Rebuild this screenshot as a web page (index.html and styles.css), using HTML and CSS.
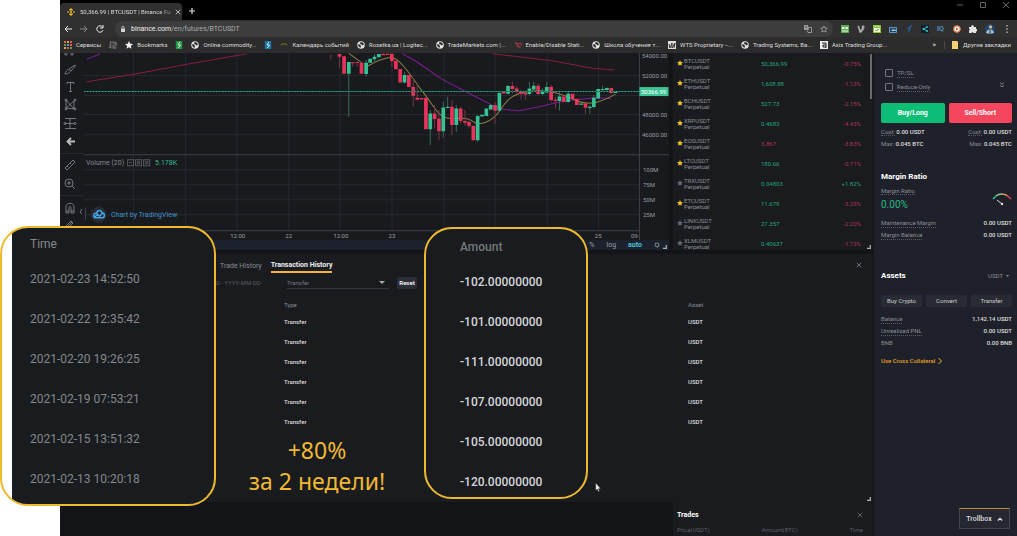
FILE: index.html
```html
<!DOCTYPE html>
<html lang="en">
<head>
<meta charset="utf-8">
<title>BTCUSDT | Binance Futures</title>
<link rel="stylesheet" href="styles.css">
</head>
<body>
<svg class="defs" aria-hidden="true">
  <symbol id="globe" viewBox="0 0 16 16"><circle cx="8" cy="8" r="7.5" fill="#e4e4e4"/><path d="M2 6l4 1 2 3-1 4-4-3zM7 2l5 1 2 4-3 2-2-2-3-1z" fill="#333"/></symbol>
  <symbol id="star" viewBox="0 0 16 16"><path d="M8 0l2.400 5.300 5.600.6-4.200 3.900L13 15.600 8 12.700 3 15.600l1.200-5.800L0 5.900l5.600-.6z" fill="currentColor"/></symbol>
  <symbol id="close" viewBox="0 0 8 8"><path d="M1 1l6 6M7 1L1 7" stroke="currentColor" fill="none"/></symbol>
  <symbol id="grip" viewBox="0 0 6 6"><path d="M5 0v5H0" stroke="currentColor" stroke-width="2" fill="none"/></symbol>
  <symbol id="doc" viewBox="0 0 10 10"><path d="M1 0h8v10H1z" fill="currentColor"/><path d="M6 1L4 5h3L4 9" stroke="#fff" fill="none"/></symbol>
</svg>
<div class="page">
  <header class="browser">
    <div class="tabs">
      <div class="tab">
        <svg class="i8" viewBox="0 0 16 16"><path d="M8 0l4 4-2 2-2-2-2 2-2-2zM8 5.500L10.500 8 8 10.500 5.500 8zM2 6l2 2-2 2-2-2zM14 6l2 2-2 2-2-2zM6 10l2 2 2-2 2 2-4 4-4-4z" fill="#f0c32d"/></svg>
        <span class="tab-title">50,366.99 | BTCUSDT | Binance Fu</span>
        <button class="icon" aria-label="Close tab"><svg class="i6"><use href="#close"/></svg></button>
      </div>
      <button class="icon plus" aria-label="New tab"><svg class="i8" viewBox="0 0 8 8"><path d="M4 1v6M1 4h6" stroke="#ddd" stroke-width="1.200"/></svg></button>
      <div class="winctl">
        <svg class="i8" viewBox="0 0 8 8"><path d="M1 4h6" stroke="#666"/></svg>
        <svg class="i8" viewBox="0 0 8 8"><path d="M1.500 1.500h5v5h-5z" stroke="#666" fill="none"/></svg>
        <svg class="i8" viewBox="0 0 8 8"><path d="M1 1l6 6M7 1L1 7" stroke="#666"/></svg>
      </div>
    </div>
    <div class="toolbar">
      <button class="icon" aria-label="Back"><svg class="i8" viewBox="0 0 8 8"><path d="M8 4H1M4 1L1 4l3 3" stroke="#eee" fill="none"/></svg></button>
      <button class="icon" aria-label="Forward"><svg class="i8" viewBox="0 0 8 8"><path d="M0 4h7M4 1l3 3-3 3" stroke="#888" fill="none"/></svg></button>
      <button class="icon" aria-label="Reload"><svg class="i8" viewBox="0 0 8 8"><path d="M7 5.200A3.200 3.200 0 1 1 6.500 2M7 0v3H4" stroke="#eee" fill="none"/></svg></button>
      <div class="omnibox">
        <svg class="i6" viewBox="0 0 8 8"><path d="M1.500 3.500h5V8h-5z" fill="#ddd"/><path d="M2.500 4V2a1.500 1.500 0 0 1 3 0v2" stroke="#ddd" fill="none"/></svg>
        <span class="url"><b>binance.com</b>/en/futures/BTCUSDT</span>
        <svg class="i8" viewBox="0 0 8 8"><path d="M0 0h4l1 5H0z" fill="#999"/><path d="M4 2.500h3.500v5H4l-1-2" stroke="#999" fill="none"/><path d="M1 2h2M5 4h2M6 4v2" stroke="#333" stroke-width=".6"/></svg>
        <svg class="i8" viewBox="-1 -1 18 18"><path d="M8 1l2.200 4.700 5 .6-3.700 3.500 1 5L8 12.300l-4.500 2.500 1-5L.8 6.300l5-.6z" fill="none" stroke="#bbb" stroke-width="1.500"/></svg>
      </div>
      <div class="exts">
        <svg class="i8" viewBox="0 0 8 8"><path d="M0 0h8v8H0z" fill="#5fae52"/><path d="M1 2h2.500v2H1zM4.500 2H7v2H4.500zM1 5.500h6v1H1z" fill="#e8f3e5"/></svg>
        <svg class="i8" viewBox="0 0 8 8"><path d="M0 2l2-1.500L3.500 5C5 3 5.500 2 4.500 2 5 0 8 0 7.500 2.500 7 5 4.500 8 3 8 2 8 1.700 4 1 2.500z" fill="#a5a5a5"/></svg>
        <svg class="i8" viewBox="0 0 8 8"><path d="M0 0h8v8H0z" fill="#8dc63f"/><path d="M1 3h6v4H1zM2 1h1v1H2zM5 1h1v1H5z" fill="#e9f7d3"/><path d="M2.500 5l1 1 2-2" stroke="#5a9222" fill="none"/></svg>
        <svg class="i8" viewBox="0 0 8 8"><path d="M.5 2.500h7v5h-7z" stroke="#5d9ac4" fill="#244560"/><path d="M2 6l2-2 1 1 1-1 1 2z" fill="#9ccbe9"/></svg>
        <svg class="i8" viewBox="0 0 8 8"><path d="M6 0L2 4h2L2 8l4-3H4.500L7 1z" fill="#245c99"/></svg>
        <svg class="i8" viewBox="0 0 8 8"><path d="M0 0h8v8H0z" fill="#10202a"/><path d="M6 2L2.500 4 6 6" stroke="#35c7b5" fill="none"/><circle cx="6" cy="2" r="1" fill="#3ca1e0"/><circle cx="2.500" cy="4" r="1" fill="#35c7b5"/><circle cx="6" cy="6" r="1" fill="#35c7b5"/></svg>
        <span class="iq">IQ</span>
        <svg class="i8" viewBox="0 0 8 8"><circle cx="4" cy="4" r="3.200" stroke="#e47a4b" stroke-width="1.200" fill="#fff"/><path d="M3 2.500L5.500 4 3 5.500z" fill="#cf4c28"/></svg>
        <svg class="i8" viewBox="0 0 8 8"><path d="M0 2h2.300a1.300 1.300 0 1 1 2.400 0H7v2a1.200 1.200 0 1 1 0 2.300V8H4.700a1.200 1.200 0 0 0-2.300 0H0V5.500a1.200 1.200 0 0 0 0-2z" fill="#e2e2e2"/></svg>
        <svg class="i10" viewBox="0 0 10 10"><circle cx="5" cy="5" r="5" fill="#21466a"/><circle cx="5.500" cy="3" r="1.700" fill="#d7b09a"/><path d="M1 9c1-5 7-5 8 0l-4 1z" fill="#a7bfd9"/><path d="M5 5v5" stroke="#18304d"/></svg>
        <svg class="i8" viewBox="0 0 8 8"><path d="M3.400 0h1.200v1.400H3.400zM3.400 3.300h1.200v1.400H3.400zM3.400 6.600h1.200V8H3.400z" fill="#ccc"/></svg>
      </div>
    </div>
    <nav class="bookmarks">
      <a href="#"><svg class="i8" viewBox="0 0 8 8"><path d="M0 0h2v2H0zM6 3h2v2H6z" fill="#e8604d"/><path d="M3 0h2v2H3zM0 6h2v2H0z" fill="#e5a93b"/><path d="M6 0h2v2H6zM3 6h2v2H3z" fill="#d9604d"/><path d="M0 3h2v2H0zM6 6h2v2H6z" fill="#58a65c"/><path d="M3 3h2v2H3z" fill="#5b8bd9"/></svg>Сервисы</a>
      <a href="#" aria-label="Cube"><svg class="i8" viewBox="0 0 8 8"><path d="M1 0l7 1-1 7-7-1z" fill="#666"/><path d="M2 3h4M3 1v6M5 4l2 2" stroke="#333"/></svg></a>
      <a href="#"><svg class="i8 pale"><use href="#star"/></svg>Bookmarks</a>
      <a href="#" class="green" aria-label="Chart"><svg class="i8"><use href="#doc"/></svg></a>
      <a href="#"><svg class="i8"><use href="#globe"/></svg>Online commodity...</a>
      <a href="#" class="blue" aria-label="Quotes"><svg class="i8"><use href="#doc"/></svg></a>
      <a href="#"><svg class="i8" viewBox="0 0 8 8"><path d="M0 5c1-4 7-4 8 0-3-2-5-2-8 0z" fill="#6b6425"/></svg>Календарь событий</a>
      <a href="#"><svg class="i8"><use href="#globe"/></svg>Rozetka.ua | Logitec...</a>
      <a href="#"><svg class="i8"><use href="#globe"/></svg>TradeMarkets.com |...</a>
      <a href="#"><svg class="i8" viewBox="0 0 8 8"><path d="M1 2c2-2 3 1 2 4M4 6c3 1 4-2 3-4L4 3M1 2l5 4" stroke="#a33c48" fill="none"/></svg>Enable/Disable Stati...</a>
      <a href="#"><svg class="i8"><use href="#globe"/></svg>Школа обучения т...</a>
      <a href="#"><svg class="i8" viewBox="0 0 8 8"><path d="M0 0h8v8H0z" fill="#ddd"/><path d="M1 3l1 4 2-5v5l3-5-1 5" stroke="#333" fill="none"/></svg>WTS Proprietary --...</a>
      <a href="#"><svg class="i8"><use href="#globe"/></svg>Trading Systems, Ba...</a>
      <a href="#"><svg class="i8" viewBox="0 0 8 8"><path d="M0 0h8v8H0z" fill="#eee"/><path d="M2 2h4v5M6 4H3v2h3" stroke="#222" fill="none"/></svg>Axis Trading Group...</a>
      <span class="more">»</span>
      <a href="#" class="other"><svg class="i8" viewBox="0 0 8 8"><path d="M1 0h5l1 1v7H1z" fill="#f2d272"/></svg>Другие закладки</a>
    </nav>
  </header>

  <main class="workspace">
    <div class="terminal">
      <div class="top">
        <section class="chart">
          <div class="drawbar">
            <svg viewBox="60 53 24 190" fill="none" stroke="#8a8d94" stroke-width=".8">
              <circle cx="66" cy="54" r="1.200"/><circle cx="72" cy="54" r="1.200"/>
              <path d="M65 74c1-4 3-5 5-4s-1 4-5 4zM69 69l6-4M71 71l5-6"/>
              <path d="M67 84v-1.500h7V84M70.500 82.500v9M69 91.500h3"/>
              <path d="M66 100v8l8-7v8l-8-9M66 108l8 1"/><circle cx="66" cy="100" r="1"/><circle cx="66" cy="109" r="1"/><circle cx="75" cy="100" r="1"/><circle cx="75" cy="109" r="1"/>
              <path d="M65 118.500h11M65 123.500h9M65 128.500h11M70 119v9"/><circle cx="65" cy="123.500" r="1"/><circle cx="75" cy="123.500" r="1"/>
              <path d="M75 141.500h-8M71 138l-3.500 3.500L71 145" stroke="#bbb" stroke-width="1.800"/>
              <path d="M60 153.500h23M60 195.500h23" stroke="#2b2e35"/>
              <path d="M65 168l8-8 2 2-8 8zM67 166l1 1M70 163l1 1"/>
              <circle cx="69" cy="183" r="4"/><path d="M72 186l3 3M67 183h4M69 181v4"/>
              <path d="M66 213v-6c0-5 8-5 8 0v6h-3v-5c0-2-2-2-2 0v5zM66 211h3M71 211h3"/>
              <path d="M65 227l6-6 2 2-5 5M67 227l5-5M82 209l-2 3 2 2"/>
            </svg>
          </div>
          <div class="plot">
            <svg viewBox="84 53 584 187" role="img" aria-label="BTCUSDT candlestick chart">
              <path d="M133.500 53v177M185.500 53v177M236.500 53v177M288.500 53v177M339.500 53v177M391.500 53v177M443.500 53v177M494.500 53v177M546.500 53v177M597.500 53v177M84 75.500h554M84 95.500h554M84 114.500h554M84 134.500h554M84 169.500h554M84 184.500h554M84 199.500h554M84 214.500h554" stroke="#25282d"/>
              <path d="M84 154.500h584M638.500 53v187M84 230.500h554" stroke="#3d4046"/>
              <g transform="translate(365 50) scale(.33333)" fill="none" stroke-width="3">
                <path d="M-835 95L-690 72-530 42-355 11M380 11L560 32 680 55 745 60" stroke="#861d42"/>
                <path d="M-835 28L-795 11M110 11L150 33 230 88 330 140 385 168 415 178 460 182 520 170 600 152 690 143 735 145" stroke="#7f1c94"/>
                <path d="M-50 10L-12 38M8 48C30 34 55 24 78 22 110 28 150 100 175 130 200 160 215 195 240 203S300 196 320 213 380 215 402 182 440 130 490 124 580 128 620 147 690 165 749 132" stroke="#8c8145"/>
                <path d="M-104 12V28M-78 20V53M-38 37V50M-25 37V50M79 12V50M143 85V170M155 100V150M207 165V235M220 180V270M259 150V255M285 170V220M298 180V228M310 205V235M388 155V222M440 95V130M453 108V130M466 120V148M479 120V150M517 100V135M556 105V155M569 140V175M659 155V192M736 112V132" stroke="#743547"/>
                <path d="M-50 36V200M2 30V80M27 12V40M117 65V100M194 180V285M233 155V262M246 140V175M272 165V245M336 195V275M375 162V180M427 105V133M491 95V135M504 95V120M530 115V135M543 95V130M581 125V182M607 125V158M672 165V190M684 135V175M710 106V123M723 112V122" stroke="#3c685b"/>
                <g stroke-width="11">
                  <path d="M-78 12V20M-64 19V71M-38 37V40M-25 37V39M-12 38V71M53 11V16M66 11V15M79 11V33M91 32V58M104 57V97M130 75V111M143 111V137M155 143V149M168 144V148M181 143V237M207 190V207M220 206V243M259 170V225M285 175V213M298 213V218M310 216V227M323 227V270M388 165V182M414 126V130M440 108V117M453 115V126M466 126V132M479 129V133M517 107V132M556 110V150M569 149V153M594 139V156M620 131V147M633 146V165M659 160V173M736 114V129" stroke="#e8335c"/>
                  <path d="M-50 36V71M2 38V72M14 26V38M27 20V28M40 12V22M117 75V97M194 190V237M233 172V243M246 170V174M272 175V225M336 198V270M349 194V199M362 175V198M375 165V178M401 128V182M427 108V131M491 115V132M504 107V118M530 122V132M543 111V127M581 139V153M607 131V156M646 160V164M672 170V174M684 143V171M697 117V145M710 117V120M723 114V120M749 126V129" stroke="#38c293"/>
                </g>
              </g>
              <path d="M84 91.500h554" stroke="#176654"/><path d="M84 91.500h554" stroke="#35b795" stroke-dasharray="1 2"/>
              <path d="M638.500 87h29v9h-29z" fill="#3bc597"/>
              <g class="axis"><text x="641" y="58">54000.00</text><text x="641" y="78">52000.00</text><text x="641" y="117">48000.00</text><text x="641" y="137">46000.00</text><text x="642" y="172">100M</text><text x="642" y="187">75M</text><text x="642" y="202">50M</text><text x="642" y="217">25M</text>
              <text x="230" y="238">12:00</text><text x="285" y="238">22</text><text x="333" y="238">12:00</text><text x="388" y="238">23</text><text x="594" y="238">25</text><text x="630" y="238">09:</text><text x="640" y="94" class="last">50366.99</text></g>
              <text x="86" y="165" class="vol">Volume (20)</text>
              <path d="M127.500 159.500h6v6h-6zM135.500 159.500h6v6h-6zM143.500 159.500h6v6h-6zM129 162.500h3M137.500 161.500h2v2h-2zM145 161l3 3M148 161l-3 3" stroke="#55585f" fill="none"/>
              <text x="155" y="165" class="volv">5.178K</text>
              <circle cx="98.500" cy="214.500" r="8" fill="#282b31"/>
              <path d="M94.500 217.500c-2-3 0-5 2-4.500 1-4 5-3 5.500-.5 3 0 3 5 .5 5zM94.500 217l3-3 2 2 3-3" fill="none" stroke="#42a5e8" stroke-width="1.500"/>
              <text x="111" y="217" class="tv">Chart by TradingView</text>
              <path d="M85.500 207v13" stroke="#3d4046"/>
            </svg>
            <div class="scalebar"><button>%</button><button>log</button><button class="on">auto</button><button aria-label="Settings"><svg class="i6" viewBox="0 0 8 8"><circle cx="4" cy="4" r="2.500" fill="none" stroke="#999" stroke-width="1.500" stroke-dasharray="1.500 .5"/></svg></button></div>
          </div>
          <svg class="grip"><use href="#grip"/></svg>
        </section>
        <section class="markets">
          <table>
            <tr><td><svg class="i6"><use href="#star"/></svg></td><td>BTCUSDT<br>Perpetual</td><td class="up">50,366.99</td><td class="down">-0.75%</td></tr>
            <tr><td><svg class="i6"><use href="#star"/></svg></td><td>ETHUSDT<br>Perpetual</td><td class="up">1,608.88</td><td class="down">-1.13%</td></tr>
            <tr><td><svg class="i6"><use href="#star"/></svg></td><td>BCHUSDT<br>Perpetual</td><td class="up">527.73</td><td class="down">-2.15%</td></tr>
            <tr><td><svg class="i6"><use href="#star"/></svg></td><td>XRPUSDT<br>Perpetual</td><td class="up">0.4683</td><td class="down">-4.43%</td></tr>
            <tr><td><svg class="i6"><use href="#star"/></svg></td><td>EOSUSDT<br>Perpetual</td><td class="down">3.867</td><td class="down">-3.83%</td></tr>
            <tr><td><svg class="i6"><use href="#star"/></svg></td><td>LTCUSDT<br>Perpetual</td><td class="up">180.66</td><td class="down">-0.71%</td></tr>
            <tr><td class="off"><svg class="i6"><use href="#star"/></svg></td><td>TRXUSDT<br>Perpetual</td><td class="up">0.04803</td><td class="up">+1.82%</td></tr>
            <tr><td><svg class="i6"><use href="#star"/></svg></td><td>ETCUSDT<br>Perpetual</td><td class="up">11.679</td><td class="down">-3.29%</td></tr>
            <tr><td class="off"><svg class="i6"><use href="#star"/></svg></td><td>LINKUSDT<br>Perpetual</td><td class="up">27.357</td><td class="down">-2.20%</td></tr>
            <tr><td class="off"><svg class="i6"><use href="#star"/></svg></td><td>XLMUSDT<br>Perpetual</td><td class="up">0.40637</td><td class="down">-1.73%</td></tr>
          </table>
          <span class="thumb"></span>
          <svg class="grip"><use href="#grip"/></svg>
        </section>
      </div>

      <section class="history">
        <div class="htabs"><button>Trade History</button><button class="on">Transaction History</button><button class="icon x" aria-label="Close history"><svg class="i6"><use href="#close"/></svg></button></div>
        <div class="filters"><span class="dates">D - YYYY-MM-DD</span>
          <span class="pick"><select aria-label="Transaction type"><option>Transfer</option></select></span>
          <button class="reset">Reset</button></div>
        <table>
          <tr><th>Type</th><th>Asset</th></tr>
          <tr><td>Transfer</td><td>USDT</td></tr>
          <tr><td>Transfer</td><td>USDT</td></tr>
          <tr><td>Transfer</td><td>USDT</td></tr>
          <tr><td>Transfer</td><td>USDT</td></tr>
          <tr><td>Transfer</td><td>USDT</td></tr>
          <tr><td>Transfer</td><td>USDT</td></tr>
        </table>
        <svg class="grip"><use href="#grip"/></svg>
      </section>

      <section class="trades">
        <div class="thead"><h2>Trades</h2><button class="icon" aria-label="Close trades"><svg class="i6"><use href="#close"/></svg></button></div>
        <div class="tcols"><span>Price(USDT)</span><span>Amount(BTC)</span><span>Time</span></div>
      </section>
    </div>

    <aside class="side">
      <div class="checks">
        <label><input type="checkbox"><u>TP/SL</u></label>
        <label><input type="checkbox"><u>Reduce-Only</u><svg class="i6 chev" viewBox="0 0 8 8"><path d="M1.500 1L4 3l2.500-2M1.500 4.500L4 6.500l2.500-2" stroke="#aaa" fill="none"/></svg></label>
      </div>
      <div class="orders"><button class="buy">Buy/Long</button><button class="sell">Sell/Short</button></div>
      <div class="kv"><span><u>Cost:</u> <b>0.00 USDT</b></span><span><u>Cost:</u> <b>0.00 USDT</b></span></div>
      <div class="kv"><span>Max: <b>0.045 BTC</b></span><span>Max: <b>0.045 BTC</b></span></div>
      <div class="ratio">
        <h2>Margin Ratio</h2>
        <div class="gauge"><div><u>Margin Ratio</u><p>0.00%</p></div>
          <svg viewBox="0 0 20 14" fill="none" stroke-width="1.500"><path d="M1 7l3-3" stroke="#2fc193"/><path d="M4 4c2-2 4-2 6-2" stroke="#8bc79b"/><path d="M10 2c2 0 3 .5 5 1.500" stroke="#e0a05a"/><path d="M15 3.500L19 7" stroke="#e8405a"/><path d="M5 8l5 4" stroke="#ddd" stroke-width="1"/><circle cx="10" cy="12" r="1.200" fill="#ddd" stroke="none"/></svg></div>
        <div class="kv"><u>Maintenance Margin</u><b>0.00 USDT</b></div>
        <div class="kv"><u>Margin Balance</u><b>0.00 USDT</b></div>
      </div>
      <div class="assets">
        <div class="ahead"><h2>Assets</h2><button class="cur">USDT <svg viewBox="0 0 6 4"><path d="M0 0h6L3 4z" fill="#888"/></svg></button></div>
        <div class="actions"><button>Buy Crypto</button><button>Convert</button><button>Transfer</button></div>
        <div class="kv"><u>Balance</u><b>1,142.14 USDT</b></div>
        <div class="kv"><u>Unrealized PNL</u><b>0.00 USDT</b></div>
        <div class="kv"><span>BNB</span><b>0.00 BNB</b></div>
        <a class="cross" href="#">Use Cross Collateral <svg class="i6" viewBox="0 0 8 8"><path d="M2 0l4 4-4 4" stroke="#f0b92d" stroke-width="1.300" fill="none"/></svg></a>
      </div>
      <button class="troll">Trollbox <svg class="i6" viewBox="0 0 8 8"><path d="M1 6l3-3 3 3" stroke="#ddd" stroke-width="1.500" fill="none"/></svg></button>
    </aside>
  </main>

  <div class="callout times"><p class="cap">Time</p><p>2021-02-23 14:52:50</p><p>2021-02-22 12:35:42</p><p>2021-02-20 19:26:25</p><p>2021-02-19 07:53:21</p><p>2021-02-15 13:51:32</p><p>2021-02-13 10:20:18</p></div>
  <div class="callout amounts"><p class="cap">Amount</p><p>-102.00000000</p><p>-101.00000000</p><p>-111.00000000</p><p>-107.00000000</p><p>-105.00000000</p><p>-120.00000000</p></div>
  <div class="promo">+80%<br>за 2 недели!</div>
  <svg class="cursor" viewBox="0 0 8 12"><path d="M1 0v10l2-2 1.500 3.500 1.500-.7L4.500 7.500H7.500z" fill="#fff" stroke="#111" stroke-width=".5"/></svg>
</div>
</body>
</html>
```
FILE: styles.css
```css
* { box-sizing: border-box; }
body { margin: 0; background: #fff; font: 6px/8px Roboto, "Noto Sans", sans-serif; color: #8a8d94; }
h2, p { margin: 0; font: inherit; }
button { border: 0; padding: 0; background: none; color: inherit; font: inherit; }
a { color: inherit; text-decoration: none; }
u { text-decoration: none; border-bottom: 1px dotted #5b5e66; }
svg { display: block; flex: none; overflow: hidden; }
table { border-collapse: collapse; }
.defs { position: absolute; width: 0; height: 0; }
.i6 { width: 6px; height: 6px; }
.i8 { width: 8px; height: 8px; }
.i10 { width: 10px; height: 10px; }
.icon { display: flex; }
.page { position: relative; min-height: 100vh; padding-left: 60px; display: flex; flex-direction: column; overflow: hidden; }

.browser { background: #2c2c2c; color: #ddd; }
.tabs { height: 20px; background: #000; display: flex; align-items: flex-end; }
.tab { width: 122px; height: 17px; border-radius: 4px 4px 0 0; background: #303030; display: flex; align-items: center; gap: 4px; padding: 0 5px 0 7px; }
.tab-title { flex: 1; padding-left: 1px; white-space: nowrap; -webkit-mask-image: linear-gradient(to right, #000 85%, #0006); mask-image: linear-gradient(to right, #000 85%, #0006); }
.plus { margin: 0 0 5px 6px; }
.winctl { margin-left: auto; display: flex; gap: 15px; padding: 0 7px 11px 0; }
.toolbar { height: 17px; background: #303030; display: flex; align-items: center; gap: 8px; padding: 0 5px 0 4px; }
.omnibox { flex: 1; height: 16px; margin-left: 3px; border-radius: 8px; background: #3d3d3d; display: flex; align-items: center; gap: 5px; padding: 0 5px; font-size: 7px; }
.omnibox svg:last-child { margin-left: 3px; }
.url { flex: 1; color: #aaa; }
.url b { font-weight: 400; color: #eee; }
.exts { display: flex; align-items: center; gap: 8px; margin-right: 1px; }
.iq { width: 8px; color: #4d96cd; font-weight: 600; font-size: 7px; }
.bookmarks { height: 16px; display: flex; align-items: center; gap: 8px; padding: 0 6px 0 4px; white-space: nowrap; }
.bookmarks a { display: flex; align-items: center; gap: 4px; }
.pale { color: #eee; }
.green { color: #239a45; }
.blue { color: #1976a8; }
.more { margin-left: auto; font-size: 8px; }
.bookmarks .other { padding-left: 6px; border-left: 1px solid #484848; }

.workspace { flex: 1; display: flex; background: #121418; }
.terminal { flex: 1; min-width: 0; display: flex; flex-direction: column; }
.top { display: flex; gap: 4px; background: #121418; margin-bottom: 4px; }
.chart { position: relative; flex: 1; display: flex; background: #181a1e; }
.drawbar { width: 24px; }
.drawbar svg { width: 24px; height: 190px; }
.plot { flex: 1; min-width: 0; }
.plot > svg { width: 100%; }
.axis { font-size: 6px; fill: #9a9da3; }
.last { fill: #fff; }
.vol { font-size: 7px; fill: #85888f; }
.volv { font-size: 7px; fill: #36b98f; }
.tv { font-size: 7px; fill: #4292c6; }
.scalebar { height: 10px; background: #1b222d; display: flex; justify-content: flex-end; align-items: center; gap: 12px; padding-right: 9px; color: #9a9da3; font-size: 7px; }
.scalebar .on { color: #45c3dc; font-weight: 700; }
.grip { position: absolute; right: 2px; bottom: 1px; width: 4px; height: 4px; color: #aaa; }

.markets { position: relative; width: 200px; background: #191b1f; }
.markets table { width: 100%; }
.markets td { height: 20px; padding: 5px 0 0; line-height: 6px; vertical-align: top; }
.markets tr:last-child td { height: 17px; }
.markets td:nth-child(1) { width: 11px; padding: 7px 0 0 4px; color: #f0c02d; }
.markets td:nth-child(2) { width: 77px; }
.markets td:nth-child(n+3) { padding-top: 8px; }
.markets td:nth-child(4) { text-align: right; padding-right: 12px; }
.markets .off { color: #666970 !important; }
.up { color: #25a37c; }
.down { color: #b33257; }
.thumb { position: absolute; top: 1px; right: 1px; width: 2px; height: 45px; background: #6a6c70; }

.history { position: relative; height: 248px; background: #191b1f; padding-right: 4px; }
.htabs { display: flex; gap: 9px; padding: 5px 7px 0 160px; font-size: 7px; line-height: 12px; }
.htabs .on { color: #eee; font-weight: 700; border-bottom: 2px solid #f0b92d; }
.htabs .x { margin: 3px 0 0 auto; }
.filters { display: flex; align-items: center; height: 20px; padding-left: 156px; }
.dates { width: 71px; color: #5b5e66; white-space: nowrap; }
.pick { position: relative; width: 102px; border-bottom: 1px solid #33363c; }
.pick::after { content: ""; position: absolute; right: 4px; top: 4px; border: 3px solid transparent; border-bottom-width: 0; border-top-color: #aaa; }
select { display: block; appearance: none; width: 100%; height: 11px; padding: 0; border: 0; background: none; color: #777a81; font: inherit; }
.reset { margin-left: 8px; width: 20px; height: 12px; border-radius: 2px; background: #2b2e36; color: #eee; font-weight: 700; }
.history table { width: calc(100% - 224px); margin: 4px 0 0 224px; table-layout: fixed; }
.history th, .history td { width: 50%; padding: 0; text-align: left; }
.history th:first-child, .history td:first-child { width: 404px; }
.history th { height: 15px; font-weight: 400; }
.history td { height: 20px; color: #ddd; font-weight: 500; }

.trades { flex: 1; align-self: flex-end; width: 200px; min-height: 33px; background: #191b1f; padding: 8px 10px 0 4px; }
.thead, .tcols { display: flex; justify-content: space-between; align-items: center; }
.thead { color: #777; }
.thead h2 { color: #fff; font-size: 7px; line-height: 10px; font-weight: 700; }
.tcols { padding-top: 6px; color: #5b5e66; }

.side { position: relative; width: 144px; background: #1f212a; border-left: 1px solid #14161a; padding: 13px 5px 0 7px; }
h2 { color: #fff; font-weight: 700; }
.checks label { display: flex; align-items: center; height: 14px; gap: 4px; padding-left: 4px; }
.checks input { appearance: none; width: 8px; height: 8px; margin: 0; border: 1px solid #70737b; border-radius: 1px; }
.chev { margin: 0 7px 4px auto; }
.orders { display: grid; grid-template-columns: 1fr 1fr; gap: 4px; margin: 9px 0 3px; }
.orders button { height: 20px; border-radius: 2px; color: #fff; font-size: 7px; font-weight: 700; }
.buy { background: #0cbd76; }
.sell { background: #f6465d; }
.kv { display: flex; justify-content: space-between; align-items: center; height: 12px; }
.kv b { color: #ddd; font-weight: 500; }
.ratio h2, .assets h2 { font-size: 8px; line-height: 12px; }
.ratio { padding-top: 21px; }
.gauge { display: flex; justify-content: space-between; align-items: center; height: 32px; margin-bottom: 2px; }
.gauge p { color: #26b982; font-size: 10px; line-height: 12px; padding-top: 4px; }
.gauge svg { width: 20px; height: 14px; }
.assets { padding-top: 29px; }
.ahead { display: flex; justify-content: space-between; align-items: center; }
.cur { display: flex; align-items: center; gap: 3px; padding-right: 3px; }
.cur svg { width: 3px; height: 2px; }
.actions { display: grid; grid-template-columns: repeat(3, 1fr); gap: 4px; margin: 13px 0 6px; }
.actions button { height: 12px; background: #282b33; color: #ccc; border-radius: 1px; }
.cross { display: flex; align-items: center; gap: 2px; padding-top: 8px; color: #e0a02d; font-weight: 500; }
.troll { position: absolute; right: 7px; bottom: 7px; width: 51px; height: 21px; display: flex; align-items: center; justify-content: center; gap: 5px; background: #252831; border: 1px solid #43464e; border-top-color: #b98e38; color: #ddd; font-size: 7px; font-weight: 500; }

.callout { position: absolute; top: 226px; border: 2px solid #efb92f; border-radius: 28px; color: #85878b; font-size: 12px; line-height: 16px; }
.callout p { height: 40px; }
.times { left: 0; width: 216px; height: 280px; padding: 8px 0 0 28px; background: linear-gradient(to right, transparent 10px, #191c1f 10px); }
.times .cap { height: 35px; }
.amounts { left: 424px; top: 227px; width: 164px; height: 272px; padding: 10px 0 0 34px; background: #191b1e; color: #d5d6d8; font-weight: 500; }
.amounts .cap { height: 35px; color: #74777b; }
.promo { position: absolute; left: 248px; top: 435px; width: 138px; color: #f0b92f; font: 23px/31px "Noto Sans", sans-serif; text-align: center; white-space: nowrap; }
.cursor { position: absolute; left: 595px; top: 483px; width: 6px; height: 9px; }
```
